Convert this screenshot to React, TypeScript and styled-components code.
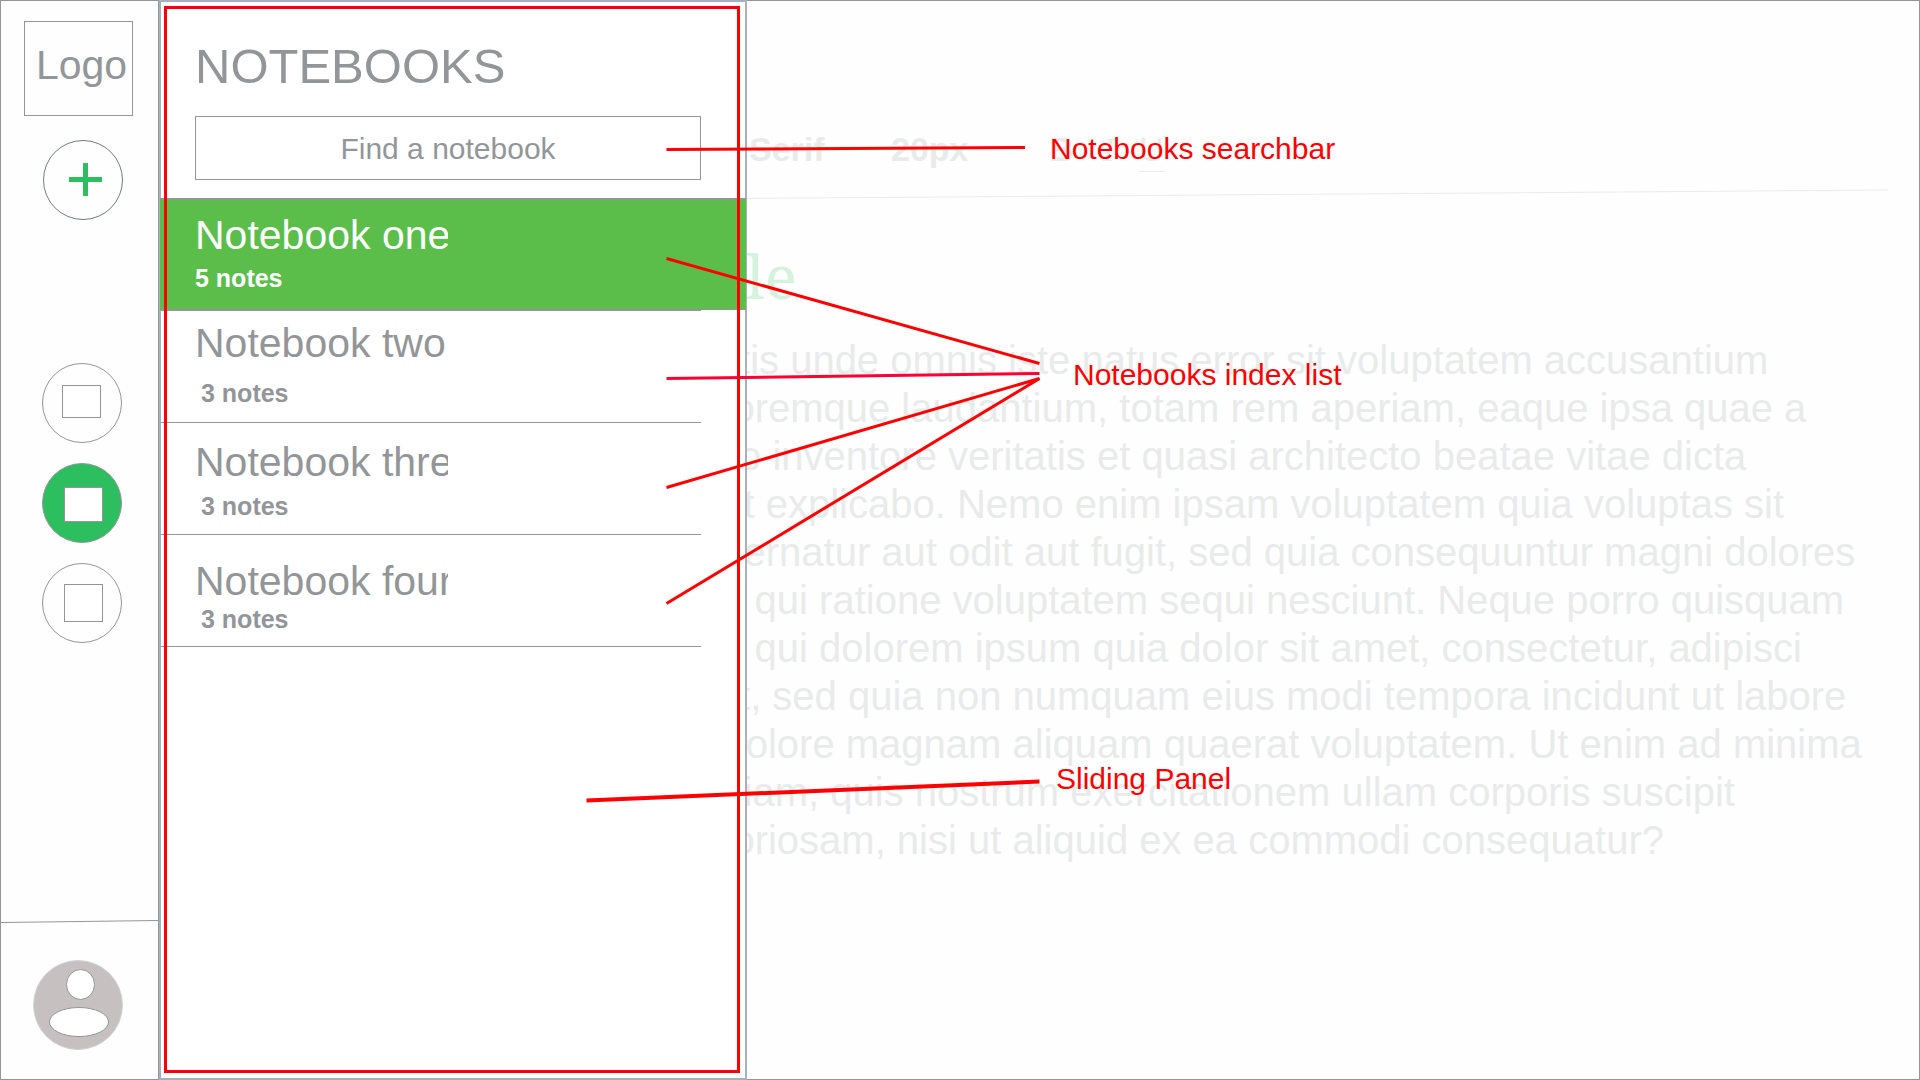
import React from "react";
import styled, { createGlobalStyle, css } from "styled-components";

const ink = "#939699";
const rule = "#939699";
const frame = "#a6b1bb";
const brand = "#2dbe60";
const active = "#5bbe4b";
const faint = "#e9ebeb";
const sans = `"Liberation Sans", Arial, sans-serif`;

const GlobalStyle = createGlobalStyle`
  *, *::before, *::after { box-sizing: border-box; }
  body { margin: 0; background: #fefefe; font-family: ${sans}; color: ${ink}; }
  button, input, select { font: inherit; color: inherit; margin: 0; padding: 0; }
`;

const Page = styled.div`
  position: relative;
  display: flex;
  height: 100vh;
  overflow: hidden;
`;

const Sidebar = styled.nav`
  flex: none;
  width: 159px;
  display: flex;
  flex-direction: column;
  align-items: flex-start;
  border: 1px solid ${rule};
`;

const Logo = styled.a`
  width: 109px;
  height: 95px;
  margin: 20px 0 0 23px;
  padding-left: 6px;
  border: 1px solid ${rule};
  color: inherit;
  text-decoration: none;
  font-size: 41px;
  line-height: 86px;
  text-align: center;
`;

const RoundButton = styled.button<{ $filled?: boolean }>`
  width: 80px;
  height: 80px;
  border: 1px solid ${rule};
  border-radius: 50%;
  background: ${(p) => (p.$filled ? brand : "transparent")};
`;

const AddButton = styled(RoundButton)`
  margin: 24px 0 0 42px;
  border-color: #6f7c88;
`;

const NavGroup = styled.div`
  display: flex;
  flex-direction: column;
  gap: 20px;
  margin: 143px 0 0 41px;
`;

const Account = styled.div`
  margin-top: auto;
  width: 100%;
  display: flex;
  flex-direction: column;
`;

const AvatarButton = styled.button`
  width: 90px;
  height: 90px;
  margin: 36px 0 29px 32px;
  border: 0;
  background: none;
`;

const Drawing = styled.svg`
  display: block;
`;

const Panel = styled.aside`
  position: absolute;
  inset: 0 auto 0 159px;
  width: 588px;
  border: 2px solid ${frame};
  background: #fff;
`;

const PanelHead = styled.header`
  padding: 33px 44px 18px 34px;
`;

const PanelTitle = styled.h1`
  margin: 0 0 19px;
  font-size: 49px;
  line-height: 62px;
  font-weight: 400;
`;

const Search = styled.input`
  display: block;
  width: 100%;
  height: 64px;
  padding-top: 2px;
  border: 1px solid ${rule};
  background: #fff;
  font-size: 30px;
  text-align: center;
  &::placeholder { color: ${ink}; opacity: 1; }
`;

const List = styled.ul`
  margin: 0;
  padding: 0;
  list-style: none;
`;

const Item = styled.li<{ $active?: boolean }>`
  height: 112px;
  margin-right: 44px;
  border-bottom: 1px solid ${rule};
  ${(p) =>
    p.$active &&
    css`
      margin: 0 -1px 0 -1px;
      padding-left: 1px;
      border-top: 2px solid ${rule};
      background: ${active};
      color: #fff;

      & + li {
        height: 113px;
        border-top: 1px solid ${rule};
      }
    `}
`;

const ItemButton = styled.button<{ $pad: number }>`
  display: block;
  width: 100%;
  padding: ${(p) => p.$pad}px 0 0 34px;
  border: 0;
  background: none;
  text-align: left;
`;

const ItemName = styled.span`
  display: block;
  width: 253px;
  overflow: hidden;
  white-space: nowrap;
  font-size: 41px;
  line-height: 46px;
`;

const ItemCount = styled.span<{ $gap: number; $inset?: boolean }>`
  display: block;
  margin-top: ${(p) => p.$gap}px;
  padding-left: ${(p) => (p.$inset ? 6 : 0)}px;
  font-size: 25px;
  line-height: 30px;
  font-weight: 700;
`;

const Editor = styled.main`
  flex: 1;
  min-width: 0;
  padding: 126px 31px 0 510px;
  border: 1px solid ${rule};
  border-left: 0;
  color: ${faint};
`;

const Toolbar = styled.div`
  display: flex;
  align-items: flex-start;
  height: 53px;
  padding-left: 80px;
  font-size: 34px;
  line-height: 44px;
  font-weight: 700;
`;

const Tool = styled.button<{ $width: number }>`
  width: ${(p) => p.$width}px;
  border: 0;
  background: none;
  text-align: left;
`;

const Serif = styled.i`
  font-family: "Liberation Serif", serif;
  font-weight: 400;
`;

const Under = styled.span`
  padding-bottom: 3px;
  border-bottom: 1px solid ${faint};
  font-weight: 400;
`;

const NoteTitle = styled.h2`
  margin: 39px 0 23px;
  font-family: "Noto Serif", "Liberation Serif", serif;
  font-size: 60px;
  line-height: 74px;
  font-weight: 400;
  color: #d5f2df;
`;

const NoteBody = styled.p`
  margin: 0;
  padding-left: 10px;
  font-size: 40px;
  line-height: 48px;
  white-space: pre;
`;

const Overlay = styled.div`
  position: absolute;
  inset: 0;
  pointer-events: none;
`;

const Outline = styled.div`
  position: absolute;
  inset: 6px auto 7px 164px;
  width: 576px;
  border: 3px solid #f00;
`;

const Pointers = styled.svg`
  position: absolute;
  inset: 0;
  width: 100%;
  height: 100%;
`;

const Label = styled.span<{ $x: number; $y: number }>`
  position: absolute;
  left: ${(p) => p.$x}px;
  top: ${(p) => p.$y}px;
  color: #f00;
  font-size: 30px;
  line-height: 36px;
  white-space: nowrap;
`;

const notebooks = [
  { name: "Notebook one", count: "5 notes", pad: 12, gap: 5, active: true },
  { name: "Notebook two", count: "3 notes", pad: 9, gap: 12 },
  { name: "Notebook three", count: "3 notes", pad: 16, gap: 6 },
  { name: "Notebook four", count: "3 notes", pad: 23, gap: 0 },
];

const note = [
  "iciatis unde omnis iste natus error sit voluptatem accusantium",
  "doloremque laudantium, totam rem aperiam, eaque ipsa quae a",
  "b illo inventore veritatis et quasi architecto beatae vitae dicta",
  "sunt explicabo. Nemo enim ipsam voluptatem quia voluptas sit",
  "aspernatur aut odit aut fugit, sed quia consequuntur magni dolores",
  "eos qui ratione voluptatem sequi nesciunt. Neque porro quisquam",
  "est, qui dolorem ipsum quia dolor sit amet, consectetur, adipisci",
  "velit, sed quia non numquam eius modi tempora incidunt ut labore",
  "et dolore magnam aliquam quaerat voluptatem. Ut enim ad minima",
  "veniam, quis nostrum exercitationem ullam corporis suscipit",
  "laboriosam, nisi ut aliquid ex ea commodi consequatur?",
].join("\n");

export default function App() {
  return (
    <>
      <GlobalStyle />
      <Page>
        <Sidebar>
          <Logo href="#">Logo</Logo>
          <AddButton aria-label="New note">
            <Drawing width="78" height="78" viewBox="1 1 78 78">
              <path d="M26 39.500h33M42.500 23v33" stroke={brand} strokeWidth="5" />
            </Drawing>
          </AddButton>
          <NavGroup>
            <RoundButton aria-label="Notes">
              <Drawing width="78" height="78" viewBox="1 1 78 78">
                <rect x="20.500" y="22.500" width="38" height="32" fill="#fff" stroke={rule} />
              </Drawing>
            </RoundButton>
            <RoundButton $filled aria-label="Notebooks">
              <Drawing width="78" height="78" viewBox="1 1 78 78">
                <rect x="22.500" y="24.500" width="38" height="34" fill="#fff" stroke={rule} />
              </Drawing>
            </RoundButton>
            <RoundButton aria-label="Tags">
              <Drawing width="78" height="78" viewBox="1 1 78 78">
                <rect x="22.500" y="21.500" width="38" height="37" fill="#fff" stroke={rule} />
              </Drawing>
            </RoundButton>
          </NavGroup>
          <Account>
            <Drawing width="100%" height="4" viewBox="0 0 158 4" preserveAspectRatio="none">
              <path d="M0 2.500L158 .5" stroke={rule} />
            </Drawing>
            <AvatarButton aria-label="Account">
              <Drawing width="90" height="90" viewBox="0 0 90 90">
                <circle cx="45" cy="45" r="44.500" fill="#c6c1c0" stroke="#cfd3d8" />
                <ellipse cx="47.500" cy="24.500" rx="14" ry="15" fill="#fff" stroke={rule} />
                <ellipse cx="46" cy="62" rx="29.500" ry="14.500" fill="#fff" stroke={rule} />
              </Drawing>
            </AvatarButton>
          </Account>
        </Sidebar>

        <Editor>
          <Toolbar>
            <Tool $width={142}>Serif</Tool>
            <Tool $width={158}>20px</Tool>
            <Tool $width={54}>B</Tool>
            <Tool $width={36}><Serif>I</Serif></Tool>
            <Tool $width={30}><Under>U</Under></Tool>
          </Toolbar>
          <Drawing width="100%" height="20" viewBox="0 0 1210 20" preserveAspectRatio="none">
            <path d="M0 19L1210 10" stroke={faint} />
          </Drawing>
          <NoteTitle>Title</NoteTitle>
          <NoteBody>{note}</NoteBody>
        </Editor>

        <Panel>
          <PanelHead>
            <PanelTitle>NOTEBOOKS</PanelTitle>
            <Search aria-label="Find a notebook" placeholder="Find a notebook" />
          </PanelHead>
          <List>
            {notebooks.map((n) => (
              <Item key={n.name} $active={n.active}>
                <ItemButton $pad={n.pad}>
                  <ItemName>{n.name}</ItemName>
                  <ItemCount $gap={n.gap} $inset={!n.active}>{n.count}</ItemCount>
                </ItemButton>
              </Item>
            ))}
          </List>
        </Panel>

        <Overlay>
          <Outline />
          <Pointers stroke="#f00" strokeWidth="3">
            <path d="M666.500 149.500L1025 147.500" />
            <path d="M666.500 258.500L1039.500 363.500" />
            <path d="M666.500 378.500L1039.500 373.500" stroke="#ff0033" />
            <path d="M666.500 487.500L1039.500 378.500" />
            <path d="M666.500 603.500L1039.500 378.500" />
            <path d="M586.500 800.500L1039.500 781.500" strokeWidth="4" />
          </Pointers>
          <Label $x={1050} $y={131}>Notebooks searchbar</Label>
          <Label $x={1073} $y={357}>Notebooks index list</Label>
          <Label $x={1056} $y={761}>Sliding Panel</Label>
        </Overlay>
      </Page>
    </>
  );
}
